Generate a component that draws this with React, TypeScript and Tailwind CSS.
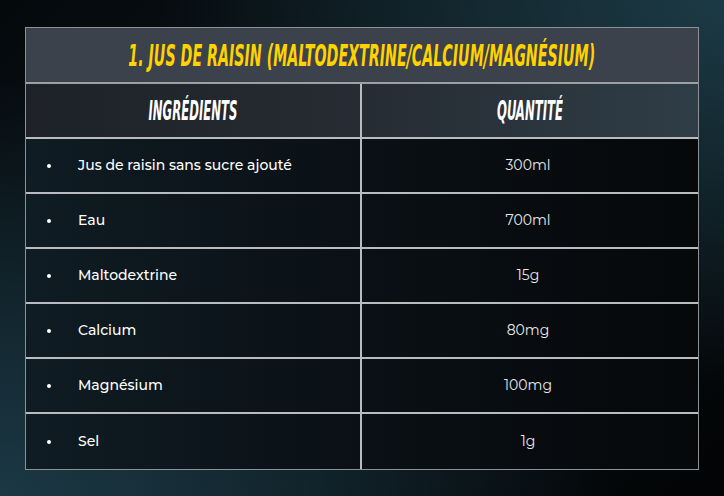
const rows = [
  { name: 'Jus de raisin sans sucre ajouté', qty: '300ml' },
  { name: 'Eau', qty: '700ml' },
  { name: 'Maltodextrine', qty: '15g' },
  { name: 'Calcium', qty: '80mg' },
  { name: 'Magnésium', qty: '100mg' },
  { name: 'Sel', qty: '1g' },
]

const display = { fontFamily: '"DejaVu Sans Condensed", "DejaVu Sans", sans-serif' }
const body = { fontFamily: '"Montserrat", "Lato", "Open Sans", sans-serif' }

export default function App() {
  return (
    <div className="w-[724px] h-[496px] overflow-hidden bg-[radial-gradient(ellipse_at_100%_0%,#1c3a45_0%,transparent_55%),radial-gradient(ellipse_at_0%_100%,#1b3844_0%,transparent_60%),linear-gradient(135deg,#05090c_0%,#0a1419_50%,#020304_100%)] pt-[27px] px-[25px]">
      <div className="w-[674px] border border-[#8c9196]">
        {/* Title */}
        <div className="h-[56px] bg-[#3b424b] flex items-center justify-center border-b-2 border-[#9aa0a5]">
          <h1
            className="text-[#ffd200] text-[31px] font-bold italic uppercase scale-x-[0.51] whitespace-nowrap leading-none"
            style={display}
          >
            1. Jus de raisin (Maltodextrine/Calcium/Magnésium)
          </h1>
        </div>

        {/* Header */}
        <div className="grid grid-cols-2 h-[55px] bg-[linear-gradient(90deg,#1e2228_0%,#262c33_50%,#2f3d47_100%)] border-b-2 border-[#b9bcbf]">
          <div className="flex items-center justify-center border-r-2 border-[#b9bcbf]">
            <span className="text-white text-[26px] font-bold italic uppercase scale-x-[0.5] whitespace-nowrap leading-none" style={display}>
              Ingrédients
            </span>
          </div>
          <div className="flex items-center justify-center">
            <span className="text-white text-[26px] font-bold italic uppercase scale-x-[0.5] whitespace-nowrap leading-none" style={display}>
              Quantité
            </span>
          </div>
        </div>

        {/* Rows */}
        {rows.map((r, i) => (
          <div
            key={r.name}
            className={`grid grid-cols-2 h-[55px] bg-[linear-gradient(90deg,#0f1c23_0%,#0a1015_50%,#06080a_100%)] ${i < rows.length - 1 ? 'border-b-2 border-[#b9bcbf]' : ''}`}
          >
            <div className="flex items-center border-r-2 border-[#b9bcbf] pl-[21px]" style={body}>
              <span className="w-[31px] flex">
                <span className="w-[4px] h-[4px] rounded-full bg-white" />
              </span>
              <span className="text-white text-[14px] font-medium">{r.name}</span>
            </div>
            <div className="flex items-center justify-center pr-[4px]" style={body}>
              <span className="text-[#e6e8ea] text-[14px]">{r.qty}</span>
            </div>
          </div>
        ))}
      </div>
    </div>
  )
}
